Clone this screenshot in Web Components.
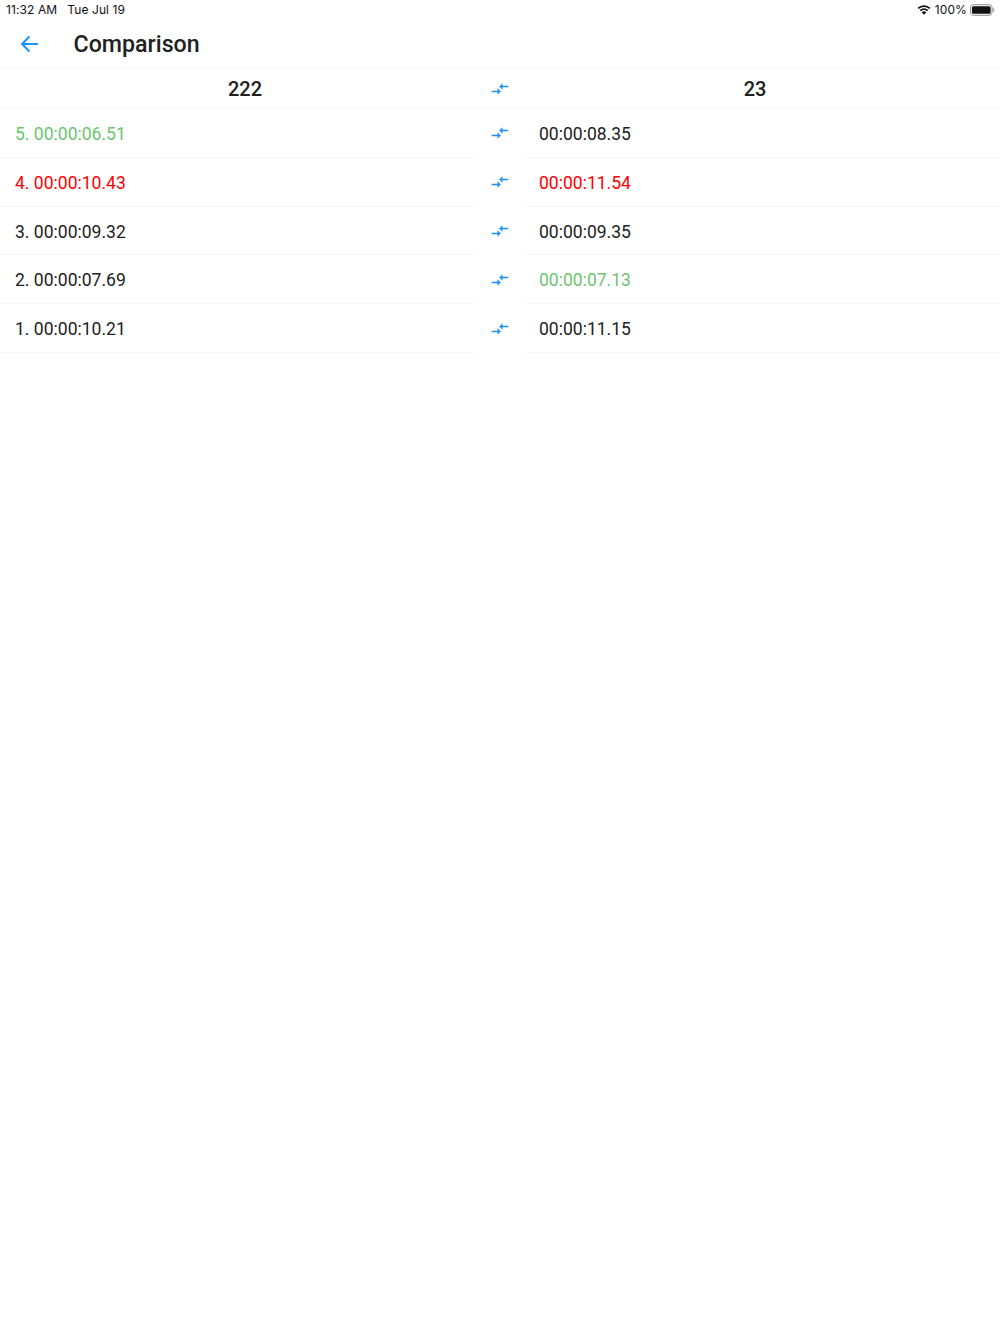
<!DOCTYPE html>
<html><head><meta charset="utf-8"><title>Comparison</title>
<style>html,body{margin:0;padding:0;background:#fff}body{font-family:Roboto,sans-serif;color:#212121}</style>
</head><body>
<status-bar></status-bar>
<app-header>Comparison</app-header>
<compare-head left="222" right="23"></compare-head>
<compare-row left="5. 00:00:06.51" right="00:00:08.35" lc="g"></compare-row>
<compare-row left="4. 00:00:10.43" right="00:00:11.54" lc="r" rc="r"></compare-row>
<compare-row left="3. 00:00:09.32" right="00:00:09.35"></compare-row>
<compare-row left="2. 00:00:07.69" right="00:00:07.13" rc="g"></compare-row>
<compare-row left="1. 00:00:10.21" right="00:00:11.15"></compare-row>
<script>
const ICON = `<svg width="20" height="20" viewBox="0 0 24 24" fill="#1e90ff"><path d="M9.01 14H2v2h7.01v3L13 15l-3.99-4v3zm5.98-1v-3H22V8h-7.01V5L11 9l3.99 4z"/></svg>`;
const COLORS = { g: '#6cc56f', r: '#ff0000' };

class StatusBar extends HTMLElement {
  constructor() {
    super();
    const root = this.attachShadow({ mode: 'open' });
    root.innerHTML = `<style>
      :host{display:flex;justify-content:space-between;align-items:center;height:20px;padding:0 5px 0 6px;font:12px/20px Inter,"Liberation Sans",sans-serif;letter-spacing:.1px;color:#111}
      .l{display:flex;gap:10px}
      .r{display:flex;align-items:center;gap:4px}
      .wifi{margin-top:-1px}
      .batt{margin-left:-1px}
    </style>
    <div class="l"><span>11:32 AM</span><span>Tue Jul 19</span></div>
    <div class="r">
      <svg class="wifi" width="14" height="10" viewBox="0 0 15 11"><path d="M7.5 10.8L5 8.2a3.5 3.5 0 0 1 5 0z" fill="#111"/><path d="M3.4 6.3a5.9 5.9 0 0 1 8.2 0M1 3.8a9.4 9.4 0 0 1 13 0" fill="none" stroke="#111" stroke-width="1.9"/></svg>
      <span>100%</span>
      <svg class="batt" width="25" height="12" viewBox="0 0 26 12"><rect x=".5" y=".5" width="22.5" height="11" rx="3" fill="none" stroke="#888"/><rect x="2" y="2" width="19.5" height="8" rx="1.6" fill="#111"/><path d="M24 4v4a2 2 0 0 0 1.3-2A2 2 0 0 0 24 4z" fill="#999"/></svg>
    </div>`;
  }
}

class AppHeader extends HTMLElement {
  constructor() {
    super();
    const root = this.attachShadow({ mode: 'open' });
    root.innerHTML = `<style>
      :host{display:flex;align-items:center;height:48px;border-bottom:1px solid #f5f5f5;font:500 23.2px/48px Roboto,sans-serif;color:#212121}
      svg{margin-left:20px;margin-right:34.5px;flex:none}
    </style>
    <svg width="19" height="18" viewBox="0 0 19 18" fill="none" stroke="#1e90ff" stroke-width="2"><path d="M18 9H2M9.5 1.5L2 9L9.5 16.5"/></svg>
    <span><slot></slot></span>`;
  }
}

class CompareHead extends HTMLElement {
  connectedCallback() {
    const root = this.shadowRoot || this.attachShadow({ mode: 'open' });
    root.innerHTML = `<style>
      :host{display:grid;grid-template-columns:490px 20px 490px;align-items:center;height:39px;border-bottom:1px solid #f5f5f5;font:500 20px/39px Roboto,sans-serif;color:#212121}
      .c{text-align:center;padding-top:1px}
      .i{display:flex;align-items:center;justify-content:center;margin-top:-1px}
    </style>
    <div class="c"></div><div class="i">${ICON}</div><div class="c"></div>`;
    const cells = root.querySelectorAll('.c');
    cells[0].textContent = this.getAttribute('left');
    cells[1].textContent = this.getAttribute('right');
  }
}

class CompareRow extends HTMLElement {
  connectedCallback() {
    const root = this.shadowRoot || this.attachShadow({ mode: 'open' });
    root.innerHTML = `<style>
      :host{display:grid;grid-template-columns:475px 50px 475px;height:48.8px;font:17.55px/50.8px Roboto,sans-serif;color:#212121}
      .c{box-sizing:border-box;height:48.8px;padding-left:15px;border-bottom:1px solid #f5f5f5}
      .c.right{padding-left:14px}
      .i{display:flex;align-items:center;justify-content:center;height:48.8px}
    </style>
    <div class="c"></div><div class="i">${ICON}</div><div class="c right"></div>`;
    const cells = root.querySelectorAll('.c');
    cells[0].textContent = this.getAttribute('left');
    cells[1].textContent = this.getAttribute('right');
    const lc = COLORS[this.getAttribute('lc')];
    const rc = COLORS[this.getAttribute('rc')];
    if (lc) cells[0].style.color = lc;
    if (rc) cells[1].style.color = rc;
  }
}

customElements.define('status-bar', StatusBar);
customElements.define('app-header', AppHeader);
customElements.define('compare-head', CompareHead);
customElements.define('compare-row', CompareRow);
</script>
</body></html>
